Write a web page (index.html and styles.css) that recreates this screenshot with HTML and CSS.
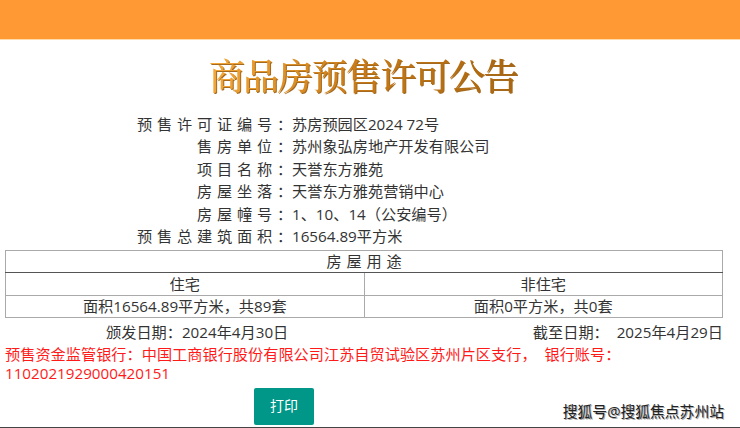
FILE: index.html
```html
<!DOCTYPE html>
<html lang="zh-CN">
<head>
<meta charset="utf-8">
<title>商品房预售许可公告</title>
<link rel="stylesheet" href="styles.css">
</head>
<body>
<header class="topbar"></header>
<h1 class="title"><span>商品房预售许可公告</span></h1>
<section class="info">
  <div class="row"><span class="label">预售许可证编号：</span><span class="value">苏房预园区2024 72号</span></div>
  <div class="row"><span class="label">售房单位：</span><span class="value">苏州象弘房地产开发有限公司</span></div>
  <div class="row"><span class="label">项目名称：</span><span class="value">天誉东方雅苑</span></div>
  <div class="row"><span class="label">房屋坐落：</span><span class="value">天誉东方雅苑营销中心</span></div>
  <div class="row"><span class="label">房屋幢号：</span><span class="value">1、10、14（公安编号）</span></div>
  <div class="row"><span class="label">预售总建筑面积：</span><span class="value">16564.89平方米</span></div>
</section>
<table class="usage">
  <tr class="row-head"><th colspan="2" class="usage-head">房屋用途</th></tr>
  <tr class="row-type"><td>住宅</td><td>非住宅</td></tr>
  <tr class="row-area"><td>面积16564.89平方米，共89套</td><td>面积0平方米，共0套</td></tr>
</table>
<div class="dates">
  <span class="date-start">颁发日期：2024年4月30日</span>
  <span class="date-end">截至日期：&nbsp; 2025年4月29日</span>
</div>
<p class="bank">预售资金监管银行：中国工商银行股份有限公司江苏自贸试验区苏州片区支行， &nbsp;银行账号：<br>1102021929000420151</p>
<div class="actions">
  <button class="print" type="button">打印</button>
  <span class="watermark">搜狐号@搜狐焦点苏州站</span>
</div>
</body>
</html>
```
FILE: styles.css
```css
html, body { margin: 0; padding: 0; height: 428px; overflow: hidden; }
body {
  background: #fff;
  color: #333;
  font-family: "Open Sans", "Noto Sans CJK SC", sans-serif;
  font-size: 15.2px;
  line-height: 22.4px;
  box-sizing: border-box;
  border-bottom: 1px solid #444;
}
.topbar { height: 39px; background: #ff9933; border-bottom: 1px solid #ffd9a8; }
.title { margin: 0; height: 70px; display: flex; justify-content: center; align-items: center; font-weight: 700; padding-right: 14px; box-sizing: border-box; }
.title span {
  font-family: "Noto Serif CJK SC", "Liberation Serif", "Noto Sans CJK SC", serif;
  font-size: 36px;
  line-height: 44px;
  letter-spacing: -1.7px;
  font-weight: 500;
  background: linear-gradient(100deg, #f5a93a 0%, #c77a17 50%, #a8650f 100%);
  -webkit-background-clip: text;
  background-clip: text;
  color: transparent;
  filter: drop-shadow(1px 1px 0 #a36a20);
}
.info { padding-top: 3px; height: 140px; box-sizing: border-box; }
.row { display: flex; height: 22.4px; }
.label { width: 297px; text-align: right; letter-spacing: 4.8px; flex: none; }
.value { margin-left: -5px; }
.usage { margin: 0 0 0 5px; width: 718px; border-collapse: collapse; table-layout: fixed; }
.usage td, .usage th { border: 1px solid #aaa; padding: 0; line-height: 21px; text-align: center; font-weight: 400; }
.row-head th { height: 21px; }
.row-type td { height: 22px; }
.row-area td { height: 21px; }
.usage-head { letter-spacing: 4.8px; padding-left: 5px !important; border-bottom-color: #555 !important; }
.dates { display: flex; justify-content: space-between; height: 26px; align-items: center; padding: 2px 17px 0 106px; box-sizing: border-box; }
.bank { margin: 0 0 0 5px; color: #ff1a1a; width: 720px; line-height: 19px; padding-top: 1px; }
.actions { display: flex; align-items: flex-start; justify-content: space-between; padding: 5px 16px 0 254px; }
.print {
  width: 60px; height: 37px; border: 0; border-radius: 2px;
  background: #009688; color: #fff;
  font: inherit; font-size: 14px; padding: 0;
}
.watermark { color: #222; font-size: 14.8px; margin-top: 12px; text-shadow: 1px 1px 0 #aaa; }
```
